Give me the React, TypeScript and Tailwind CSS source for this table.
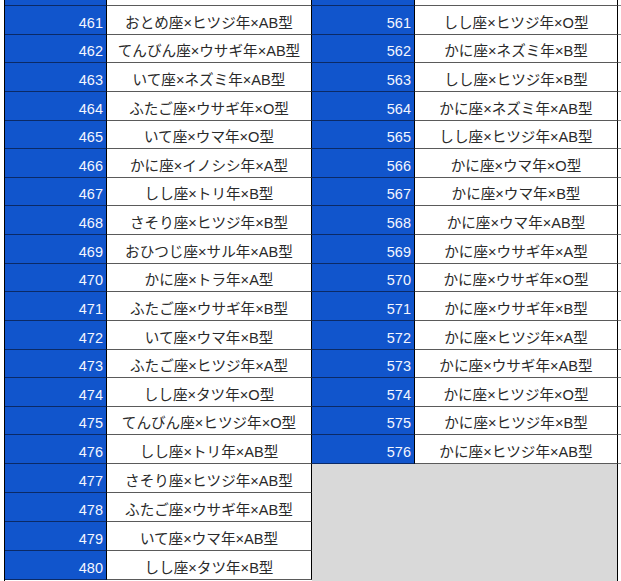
import React from "react";

const left: [number, string][] = [
  [461, "おとめ座×ヒツジ年×AB型"],
  [462, "てんびん座×ウサギ年×AB型"],
  [463, "いて座×ネズミ年×AB型"],
  [464, "ふたご座×ウサギ年×O型"],
  [465, "いて座×ウマ年×O型"],
  [466, "かに座×イノシシ年×A型"],
  [467, "しし座×トリ年×B型"],
  [468, "さそり座×ヒツジ年×B型"],
  [469, "おひつじ座×サル年×AB型"],
  [470, "かに座×トラ年×A型"],
  [471, "ふたご座×ウサギ年×B型"],
  [472, "いて座×ウマ年×B型"],
  [473, "ふたご座×ヒツジ年×A型"],
  [474, "しし座×タツ年×O型"],
  [475, "てんびん座×ヒツジ年×O型"],
  [476, "しし座×トリ年×AB型"],
  [477, "さそり座×ヒツジ年×AB型"],
  [478, "ふたご座×ウサギ年×AB型"],
  [479, "いて座×ウマ年×AB型"],
  [480, "しし座×タツ年×B型"],
];

const right: [number, string][] = [
  [561, "しし座×ヒツジ年×O型"],
  [562, "かに座×ネズミ年×B型"],
  [563, "しし座×ヒツジ年×B型"],
  [564, "かに座×ネズミ年×AB型"],
  [565, "しし座×ヒツジ年×AB型"],
  [566, "かに座×ウマ年×O型"],
  [567, "かに座×ウマ年×B型"],
  [568, "かに座×ウマ年×AB型"],
  [569, "かに座×ウサギ年×A型"],
  [570, "かに座×ウサギ年×O型"],
  [571, "かに座×ウサギ年×B型"],
  [572, "かに座×ヒツジ年×A型"],
  [573, "かに座×ウサギ年×AB型"],
  [574, "かに座×ヒツジ年×O型"],
  [575, "かに座×ヒツジ年×B型"],
  [576, "かに座×ヒツジ年×AB型"],
];

const font = { fontFamily: '"Liberation Sans", Arial, "Noto Sans CJK JP", sans-serif' };

function Row({
  n,
  t,
  tall,
  numW,
  textW,
  filler,
}: {
  n: number;
  t: string;
  tall: boolean;
  numW: string;
  textW: string;
  filler?: boolean;
}) {
  return (
    <div className={`flex shrink-0 ${tall ? "h-[29px]" : "h-[28.625px]"}`}>
      <div
        className={`${numW} flex items-end justify-end pr-[3px] pb-[2px] bg-[#1155cc] text-[#f4f6ff] text-[14.5px] leading-[17px] border-r border-b border-r-black border-b-[#0b2a66]`}
      >
        {n}
      </div>
      <div
        className={`${textW} flex items-end justify-center pb-[2px] bg-white text-[#2a2a2a] text-[14.6px] leading-[17px] border-r border-b border-r-black border-b-[#5a5a5a] whitespace-nowrap`}
      >
        {t}
      </div>
      {filler && <div className="flex-1 border-b border-b-[#808080]" />}
    </div>
  );
}

export default function App() {
  return (
    <div className="w-[621px] h-[581px] bg-white overflow-hidden flex" style={font}>
      <div className="ml-[4px] flex flex-col border-l border-black">
        <div className="flex shrink-0 h-[6px]">
          <div className="w-[102px] bg-[#1155cc] border-r border-b border-r-black border-b-[#0b2a66]" />
          <div className="w-[205px] bg-white border-r border-b border-r-black border-b-[#5a5a5a]" />
        </div>
        {left.map(([n, t], i) => (
          <Row key={n} n={n} t={t} tall={i >= 16} numW="w-[102px]" textW="w-[205px]" />
        ))}
      </div>
      <div className="flex-1 flex flex-col">
        <div className="flex shrink-0 h-[6px]">
          <div className="w-[103px] bg-[#1155cc] border-r border-b border-r-black border-b-[#0b2a66]" />
          <div className="w-[203px] bg-white border-r border-b border-r-black border-b-[#5a5a5a]" />
          <div className="flex-1 border-b border-b-[#808080]" />
        </div>
        {right.map(([n, t]) => (
          <Row key={n} n={n} t={t} tall={false} numW="w-[103px]" textW="w-[203px]" filler />
        ))}
        <div className="flex flex-1">
          <div className="w-[306px] bg-[#d9d9d9] border-r border-black" />
          <div className="flex-1" />
        </div>
      </div>
    </div>
  );
}
